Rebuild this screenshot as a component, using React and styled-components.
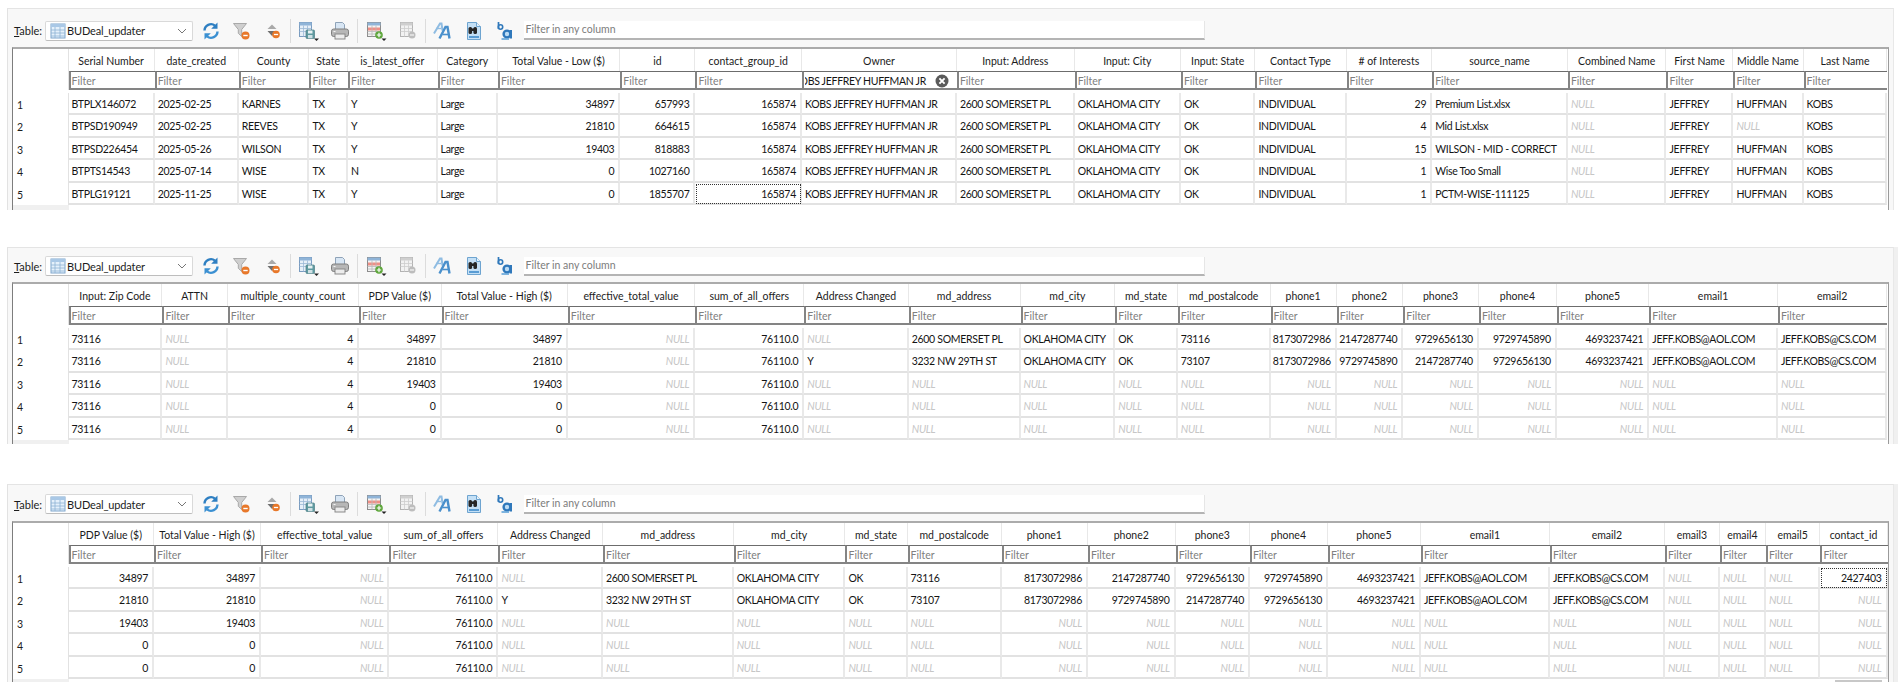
import React from "react";
import styled, { createGlobalStyle } from "styled-components";

const Global = createGlobalStyle`
  html, body { margin: 0; padding: 0; background: #fff; width: 1898px; height: 682px; overflow: hidden; }
  #root { width: 1898px; height: 682px; overflow: hidden; }
  * { box-sizing: border-box; }
`;

const Page = styled.div`
  width: 1898px;
  height: 682px;
  overflow: hidden;
  padding-top: 8px;
  display: flex;
  flex-direction: column;
  font-family: Lato, "Noto Sans", sans-serif;
  font-size: 10.5px;
  color: #141414;
`;

const Section = styled.section`
  display: flex;
  flex: none;
  height: ${(p) => p.$height}px;
  margin-bottom: ${(p) => p.$after}px;
  padding-left: 7px;
`;

const Panel = styled.div`
  width: 1887px;
  height: 100%;
  background: #f8f8f8;
  border-top: 1px solid #e4e4e4;
  border-left: 1px solid #e2e2e2;
  border-right: 1px solid #e8e8e8;
  padding: 0 4px 0 4px;
  display: flex;
  flex-direction: column;
  overflow: hidden;
`;

const ScrollStrip = styled.div`
  width: 4px;
  height: 100%;
  background: ${(p) => (p.$show ? "#f0f0f0" : "transparent")};
`;

const Toolbar = styled.div`
  flex: none;
  height: ${(p) => p.$height}px;
  padding-top: ${(p) => p.$pad}px;
  display: flex;
  align-items: center;
  margin-left: -4px;
  padding-left: 6px;
`;

const TableLabel = styled.label`
  width: 31px;
  font-size: 11px;
  color: #1c1c1c;
  flex: none;
`;

const Underlined = styled.span`
  text-decoration: underline;
`;

const Combo = styled.div`
  flex: none;
  width: 148px;
  height: 20px;
  background: #fff;
  border: 1px solid #d9d9d9;
  border-bottom-color: #bdbdbd;
  border-radius: 2px;
  display: flex;
  align-items: center;
  padding: 0 5px 0 4px;
  gap: 1px;
  margin-right: 2px;
`;

const ComboText = styled.span`
  flex: 1;
  font-size: 11px;
  letter-spacing: -0.15px;
  color: #1c1c1c;
  white-space: nowrap;
`;

const IconSlot = styled.span`
  flex: none;
  width: 31px;
  height: 22px;
  display: flex;
  align-items: center;
  justify-content: center;
`;

const Separator = styled.span`
  flex: none;
  width: 1px;
  height: 24px;
  background: #dcdcdc;
  margin: 0 ${(p) => p.$r}px 0 ${(p) => p.$l}px;
`;

const GlobalFilter = styled.div`
  flex: none;
  width: 681px;
  height: 19px;
  margin-left: 3px;
  background: #fff;
  border-bottom: 2px solid #b4b4b4;
  border-right: 1px solid #e6e6e6;
  color: #7c7c7c;
  font-size: 10.5px;
  line-height: 17px;
  padding-left: 2px;
`;

const Frame = styled.div`
  flex: 1;
  min-height: 0;
  width: 1877px;
  background: #fff;
  border-top: 2px solid #ababab;
  border-left: 1px solid #7d7d7d;
  border-right: 1px solid #9a9a9a;
  overflow: hidden;
`;

const Row = styled.div`
  display: grid;
  grid-template-columns: ${(p) => p.$cols};
  height: ${(p) => p.$h}px;
`;

const HeadCell = styled.div`
  display: flex;
  align-items: center;
  justify-content: center;
  padding-top: 2px;
  white-space: nowrap;
  overflow: hidden;
  border-right: 1px solid #e8e8e8;
  color: #1c1c1c;
`;

const FilterRowBox = styled(Row)`
  margin-bottom: 2.5px;
`;

const CornerCell = styled.div`
  background: #fff;
  border-right: 1px solid #e2e2e2;
`;

const FilterCell = styled.div`
  display: flex;
  align-items: center;
  border-top: 1px solid #6c6c6c;
  border-left: 2px solid #848484;
  border-bottom: 2px solid #848484;
  padding: 1px 0 0 1px;
  color: #808080;
  overflow: hidden;
  white-space: nowrap;
  background: #fff;
  min-width: 0;
`;

const ActiveFilterText = styled.span`
  flex: 1;
  min-width: 0;
  display: flex;
  justify-content: flex-end;
  overflow: hidden;
  color: #141414;
  letter-spacing: -0.3px;
  padding-right: 9px;
`;

const RowNumber = styled.div`
  display: flex;
  align-items: center;
  padding: 2px 0 0 4px;
  border-right: 1px solid #e2e2e2;
  color: #1c1c1c;
`;

const Cell = styled.div`
  display: flex;
  align-items: center;
  justify-content: ${(p) => (p.$right ? "flex-end" : "flex-start")};
  padding: 2px 4px 0 3px;
  white-space: nowrap;
  overflow: hidden;
  letter-spacing: -0.3px;
  border-right: 2px solid #e9e9e9;
  border-bottom: 2px solid #e2e2e2;
  color: #141414;
  outline: ${(p) => (p.$focus ? "1px dotted #333" : "none")};
  outline-offset: -2px;
`;

const NullText = styled.span`
  font-style: italic;
  color: #c6c6c6;
`;

const Filler = styled.div`
  width: 55.5px;
  height: 12px;
  background: #f0f0f0;
`;

const HScrollThumb = styled.div`
  position: absolute;
  left: 1835px;
  top: 680px;
  width: 47px;
  height: 2px;
  background: #c8c8c8;
`;

/* ---------- icons ---------- */
const TableIcon = () => (
  <svg width="16" height="16" viewBox="0 0 16 16">
    <rect x="1" y="1" width="14" height="14" fill="#e4f0fb" stroke="#7fa6cc" />
    <rect x="1" y="1" width="14" height="3" fill="#a9c8e6" />
    <path d="M1 7h14M1 10h14M1 13h14M5 4v11M10 4v11" stroke="#8eb2d4" strokeWidth=".8" />
  </svg>
);

const Chevron = () => (
  <svg width="10" height="6" viewBox="0 0 10 6">
    <path d="M1 1l4 4 4-4" fill="none" stroke="#777" strokeWidth="1" />
  </svg>
);

const Refresh = () => (
  <svg width="20" height="20" viewBox="0 0 20 20">
    <path d="M3.5 9.5A6.5 6.5 0 0 1 14 4.6" fill="none" stroke="#2e7fc2" strokeWidth="2.4" />
    <path d="M16.5 1.5v6.3h-6.3z" fill="#2e7fc2" />
    <path d="M16.5 10.5A6.5 6.5 0 0 1 6 15.4" fill="none" stroke="#3b90d2" strokeWidth="2.4" />
    <path d="M3.5 18.5v-6.3h6.3z" fill="#3b90d2" />
  </svg>
);

const FunnelClear = () => (
  <svg width="20" height="20" viewBox="0 0 20 20">
    <path d="M1.5 2.5h13l-4.8 6v7l-3.4-3.2V8.5z" fill="#cfcfcf" stroke="#a9a9a9" />
    <circle cx="13.5" cy="14.5" r="4" fill="#e8782a" />
    <path d="M11.3 14.5h4.4" stroke="#fff" strokeWidth="1.4" />
  </svg>
);

const SortClear = () => (
  <svg width="20" height="20" viewBox="0 0 20 20">
    <path d="M9 3.5l4.5 4.5h-9z" fill="#a9a9a9" />
    <path d="M4.5 10h9l-4.5 5z" fill="#6f6f6f" />
    <circle cx="13" cy="13.5" r="3.8" fill="#e8782a" />
    <path d="M10.9 13.5h4.2" stroke="#fff" strokeWidth="1.3" />
  </svg>
);

const SaveTable = () => (
  <svg width="22" height="20" viewBox="0 0 22 20">
    <rect x="1.5" y="1.5" width="12" height="14" fill="#e6eff8" stroke="#7a9cc0" />
    <rect x="1.5" y="1.5" width="12" height="3" fill="#8fb4d8" />
    <path d="M1.5 7.5h12M1.5 10.5h12M5.5 4.5v11M9.5 4.5v11" stroke="#9cb9d6" strokeWidth=".8" />
    <rect x="8" y="9" width="8.5" height="8.5" rx="1" fill="#5f9aa0" stroke="#4d7f86" strokeWidth=".7" />
    <rect x="10" y="9.5" width="4.5" height="3" fill="#e8f2f4" />
    <rect x="10" y="14" width="4.5" height="3.2" fill="#cfe0e4" />
    <path d="M16 17.5h5l-2.5 2.5z" fill="#222" />
  </svg>
);

const Printer = () => (
  <svg width="20" height="20" viewBox="0 0 20 20">
    <path d="M5.5 1.5h7l2 2v5h-9z" fill="#d8e6f4" stroke="#8fa3b8" />
    <rect x="1.5" y="8" width="17" height="7.5" rx="2.2" fill="#b7b7b7" stroke="#7e7e7e" />
    <rect x="5" y="13" width="10" height="5" fill="#ececec" stroke="#8a8a8a" />
    <rect x="3.5" y="10" width="2" height="1" fill="#f4f4f4" />
  </svg>
);

const AddRow = () => (
  <svg width="22" height="20" viewBox="0 0 22 20">
    <rect x="1.5" y="1.5" width="13" height="14" fill="#f4f4f4" stroke="#8c8c8c" />
    <rect x="1.5" y="1.5" width="13" height="3" fill="#8fb4d8" />
    <rect x="2" y="6.5" width="12" height="3" fill="#ef8f86" />
    <path d="M1.5 10.5h13M1.5 13h13M6 4.5v11M10 4.5v11" stroke="#b9b9b9" strokeWidth=".8" />
    <circle cx="13" cy="14" r="3.8" fill="#5da63a" />
    <path d="M10.8 14h4.4M13 11.8v4.4" stroke="#fff" strokeWidth="1.2" />
    <path d="M15.5 17.5h5L18 20z" fill="#222" />
  </svg>
);

const DeleteRowDisabled = () => (
  <svg width="20" height="20" viewBox="0 0 20 20">
    <rect x="2.5" y="1.5" width="12" height="14" fill="#f2f2f2" stroke="#b3b3b3" />
    <rect x="2.5" y="1.5" width="12" height="3" fill="#cfcfcf" />
    <path d="M2.5 7.5h12M2.5 10.5h12M6.5 4.5v11M10.5 4.5v11" stroke="#cdcdcd" strokeWidth=".8" />
    <circle cx="14" cy="14" r="3.5" fill="#bdbdbd" />
    <path d="M12 14h4" stroke="#f5f5f5" strokeWidth="1.2" />
  </svg>
);

const FontIcon = () => (
  <svg width="20" height="20" viewBox="0 0 20 20">
    <path d="M1 12.5L7 2.5h1.5l1 7" fill="none" stroke="#8fbce2" strokeWidth="2" />
    <path d="M3 7.5h5" stroke="#8fbce2" strokeWidth="1.4" />
    <path d="M6.5 17.5l6-11.5h2l2 11.5" fill="none" stroke="#4a90cc" strokeWidth="2.4" />
    <path d="M9.5 13.5h6" stroke="#4a90cc" strokeWidth="1.6" />
  </svg>
);

const FindDoc = () => (
  <svg width="20" height="20" viewBox="0 0 20 20">
    <path d="M3.5 1.5h9l4 4v13h-13z" fill="#c4e0f6" stroke="#6ea4d0" />
    <path d="M12.5 1.5v4h4" fill="#e8f3fb" stroke="#6ea4d0" />
    <rect x="4.5" y="6" width="3.6" height="7" rx="1.6" fill="#262626" />
    <rect x="9.4" y="6" width="3.6" height="7" rx="1.6" fill="#262626" />
    <rect x="7.5" y="7.5" width="2.5" height="2.5" fill="#262626" />
    <path d="M5 16h10" stroke="#3f8bcb" strokeWidth="1.6" />
  </svg>
);

const ReplaceIcon = () => (
  <svg width="20" height="20" viewBox="0 0 20 20">
    <path d="M3.5 1v7" stroke="#2f78bb" strokeWidth="1.7" />
    <circle cx="5.5" cy="6" r="2.2" fill="none" stroke="#2f78bb" strokeWidth="1.6" />
    <circle cx="12" cy="13" r="3.4" fill="#bcdcf5" stroke="#2f78bb" strokeWidth="2.4" />
    <path d="M15.8 9v8.5" stroke="#2f78bb" strokeWidth="2.4" />
    <path d="M6.5 18h7.5" stroke="#5fa2d8" strokeWidth="1.6" />
  </svg>
);

const ClearCircle = () => (
  <svg width="14" height="14" viewBox="0 0 14 14" style={{ flex: "none", marginRight: "8px" }}>
    <circle cx="7" cy="7" r="6.5" fill="#5a5a5a" />
    <path d="M4.4 4.4l5.2 5.2M9.6 4.4l-5.2 5.2" stroke="#fff" strokeWidth="1.9" />
  </svg>
);

/* ---------- data ---------- */
const N = null;
const rep = (v) => [v, v, v, v, v];
const OWNER = "KOBS JEFFREY HUFFMAN JR";
const AOL = "JEFF.KOBS@AOL.COM";
const CS = "JEFF.KOBS@CS.COM";

const shared = {
  pdp: ["PDP Value ($)", [34897, 21810, 19403, 0, 0], true],
  high: ["Total Value - High ($)", [34897, 21810, 19403, 0, 0], true],
  eff: ["effective_total_value", rep(N), true],
  sum: ["sum_of_all_offers", rep("76110.0"), true],
  chg: ["Address Changed", [N, "Y", N, N, N], false],
  addr: ["md_address", ["2600 SOMERSET PL", "3232 NW 29TH ST", N, N, N], false],
  city: ["md_city", ["OKLAHOMA CITY", "OKLAHOMA CITY", N, N, N], false],
  st: ["md_state", ["OK", "OK", N, N, N], false],
  zip: ["md_postalcode", ["73116", "73107", N, N, N], false],
  p1: ["phone1", ["8173072986", "8173072986", N, N, N], true],
  p2: ["phone2", ["2147287740", "9729745890", N, N, N], true],
  p3: ["phone3", ["9729656130", "2147287740", N, N, N], true],
  p4: ["phone4", ["9729745890", "9729656130", N, N, N], true],
  p5: ["phone5", ["4693237421", "4693237421", N, N, N], true],
  e1: ["email1", [AOL, AOL, N, N, N], false],
  e2: ["email2", [CS, CS, N, N, N], false],
};

const panels = [
  {
    height: 202, after: 37, toolbar: 38, pad: 5, strip: false,
    edges: [68.5, 154.7, 238.8, 309.4, 348, 437.6, 498, 620.4, 695.5, 802, 957, 1074.7, 1181, 1255.5, 1346.6, 1432.3, 1568, 1666.6, 1733.5, 1803.7, 1887.6],
    focus: [4, 8],
    activeFilter: 9,
    cols: [
      ["Serial Number", ["BTPLX146072", "BTPSD190949", "BTPSD226454", "BTPTS14543", "BTPLG19121"], false],
      ["date_created", ["2025-02-25", "2025-02-25", "2025-05-26", "2025-07-14", "2025-11-25"], false],
      ["County", ["KARNES", "REEVES", "WILSON", "WISE", "WISE"], false],
      ["State", rep("TX"), false],
      ["is_latest_offer", ["Y", "Y", "Y", "N", "Y"], false],
      ["Category", rep("Large"), false],
      ["Total Value - Low ($)", [34897, 21810, 19403, 0, 0], true],
      ["id", [657993, 664615, 818883, 1027160, 1855707], true],
      ["contact_group_id", rep(165874), true],
      ["Owner", rep(OWNER), false],
      ["Input: Address", rep("2600 SOMERSET PL"), false],
      ["Input: City", rep("OKLAHOMA CITY"), false],
      ["Input: State", rep("OK"), false],
      ["Contact Type", rep("INDIVIDUAL"), false],
      ["# of Interests", [29, 4, 15, 1, 1], true],
      ["source_name", ["Premium List.xlsx", "Mid List.xlsx", "WILSON - MID - CORRECT", "Wise Too Small", "PCTM-WISE-111125"], false],
      ["Combined Name", rep(N), false],
      ["First Name", rep("JEFFREY"), false],
      ["Middle Name", ["HUFFMAN", N, "HUFFMAN", "HUFFMAN", "HUFFMAN"], false],
      ["Last Name", rep("KOBS"), false],
    ],
  },
  {
    height: 197, after: 40, toolbar: 34, pad: 2, strip: true,
    edges: [68.5, 162.4, 227.8, 359, 441.6, 567.8, 695.3, 804.3, 908.8, 1020.6, 1115.3, 1177.8, 1270.6, 1336.8, 1403.3, 1479, 1557, 1649.4, 1778, 1887.6],
    cols: [
      ["Input: Zip Code", rep("73116"), false],
      ["ATTN", rep(N), false],
      ["multiple_county_count", rep(4), true],
      shared.pdp, shared.high, shared.eff, shared.sum, shared.chg, shared.addr, shared.city, shared.st, shared.zip,
      shared.p1, shared.p2, shared.p3, shared.p4, shared.p5, shared.e1, shared.e2,
    ],
  },
  {
    height: 198, after: 0, toolbar: 36, pad: 2, strip: true,
    edges: [68.5, 154, 261, 389.4, 498.4, 603, 733.7, 845.5, 907.6, 1001.8, 1088, 1175.7, 1250, 1328, 1421, 1550, 1665, 1720, 1766, 1820.5, 1887.6],
    focus: [0, 19],
    cols: [
      shared.pdp, shared.high, shared.eff, shared.sum, shared.chg, shared.addr, shared.city, shared.st, shared.zip,
      shared.p1, shared.p2, shared.p3, shared.p4, shared.p5, shared.e1, shared.e2,
      ["email3", rep(N), false],
      ["email4", rep(N), false],
      ["email5", rep(N), false],
      ["contact_id", [2427403, N, N, N, N], true],
    ],
  },
];

const template = (edges) => {
  const widths = [edges[0] - 13];
  for (let i = 1; i < edges.length; i++) widths.push(+(edges[i] - edges[i - 1]).toFixed(1));
  return widths.map((w) => `${w}px`).join(" ");
};

const ToolbarContent = () => (
  <>
    <TableLabel><Underlined>T</Underlined>able:</TableLabel>
    <Combo>
      <TableIcon />
      <ComboText>BUDeal_updater</ComboText>
      <Chevron />
    </Combo>
    <IconSlot><Refresh /></IconSlot>
    <IconSlot><FunnelClear /></IconSlot>
    <IconSlot><SortClear /></IconSlot>
    <Separator $l={2} $r={2} />
    <IconSlot><SaveTable /></IconSlot>
    <IconSlot><Printer /></IconSlot>
    <Separator $l={2} $r={3.5} />
    <IconSlot><AddRow /></IconSlot>
    <IconSlot><DeleteRowDisabled /></IconSlot>
    <Separator $l={1} $r={2} />
    <IconSlot><FontIcon /></IconSlot>
    <IconSlot><FindDoc /></IconSlot>
    <IconSlot><ReplaceIcon /></IconSlot>
    <GlobalFilter>Filter in any column</GlobalFilter>
  </>
);

const DataPanel = ({ data }) => {
  const cols = template(data.edges);
  return (
    <Section $height={data.height} $after={data.after}>
      <Panel>
        <Toolbar $height={data.toolbar} $pad={data.pad}>
          <ToolbarContent />
        </Toolbar>
        <Frame>
          <Row $cols={cols} $h={22}>
            <CornerCell />
            {data.cols.map(([name]) => <HeadCell key={name}>{name}</HeadCell>)}
          </Row>
          <FilterRowBox $cols={cols} $h={19}>
            <CornerCell />
            {data.cols.map(([name], i) => (
              <FilterCell key={name}>
                {data.activeFilter === i ? (
                  <>
                    <ActiveFilterText>{OWNER}</ActiveFilterText>
                    <ClearCircle />
                  </>
                ) : "Filter"}
              </FilterCell>
            ))}
          </FilterRowBox>
          {[0, 1, 2, 3, 4].map((r) => (
            <Row key={r} $cols={cols} $h={22.5}>
              <RowNumber>{r + 1}</RowNumber>
              {data.cols.map(([name, values, right], c) => (
                <Cell
                  key={name}
                  $right={right}
                  $focus={data.focus && data.focus[0] === r && data.focus[1] === c}
                >
                  {values[r] === null ? <NullText>NULL</NullText> : values[r]}
                </Cell>
              ))}
            </Row>
          ))}
          <Filler />
        </Frame>
      </Panel>
      <ScrollStrip $show={data.strip} />
    </Section>
  );
};

export default function App() {
  return (
    <Page>
      <Global />
      {panels.map((p, i) => <DataPanel key={i} data={p} />)}
      <HScrollThumb />
    </Page>
  );
}
